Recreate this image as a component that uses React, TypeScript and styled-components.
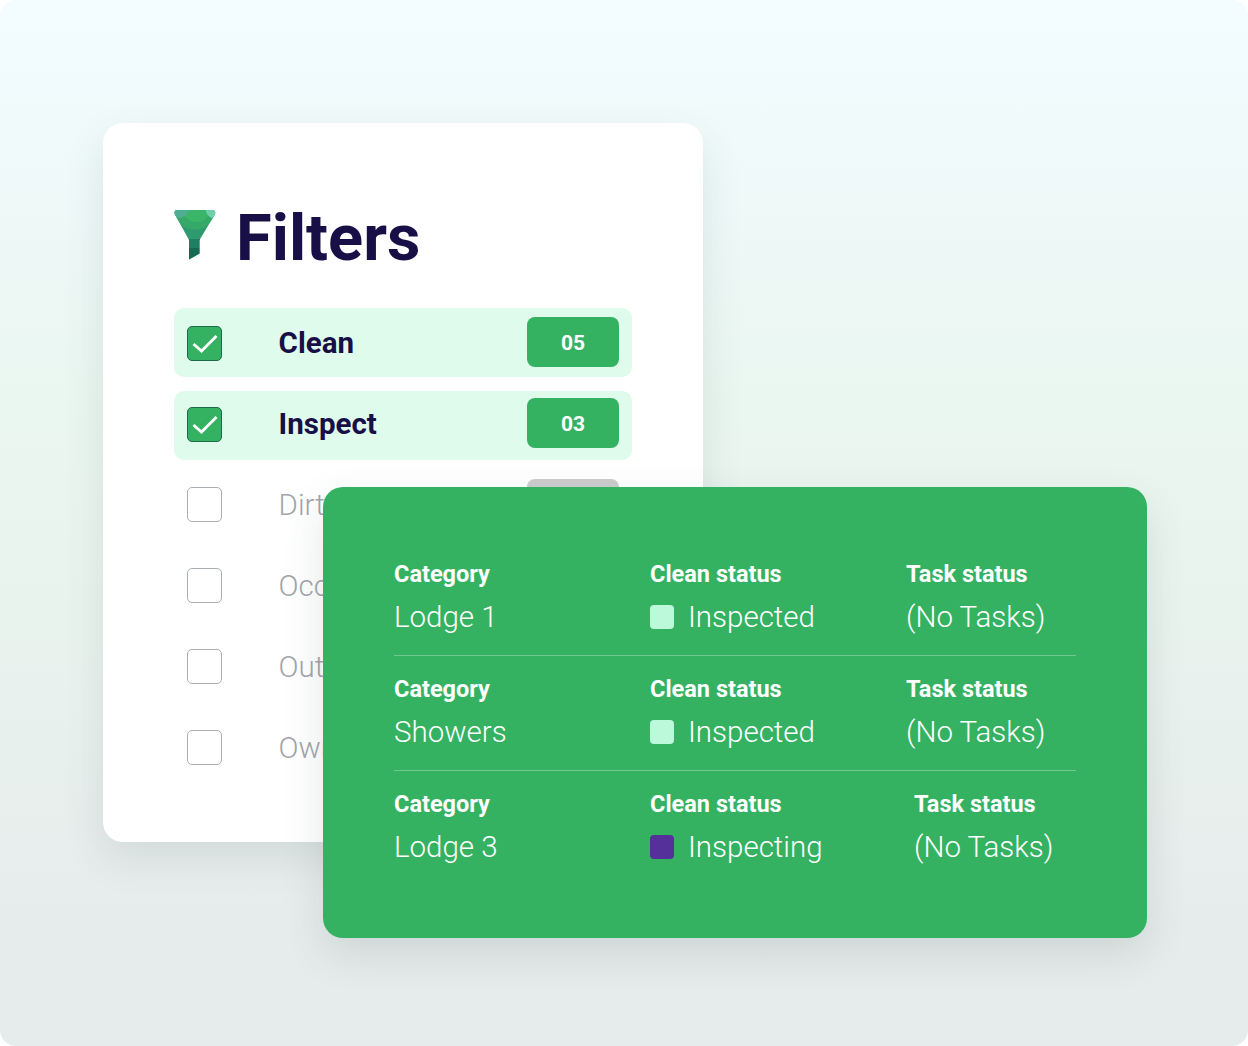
import React from "react";
import styled, { createGlobalStyle } from "styled-components";

const filters = [
  { id: 1, label: "Clean", count: "05", checked: true },
  { id: 2, label: "Inspect", count: "03", checked: true },
  { id: 3, label: "Dirty", count: "02", checked: false },
  { id: 4, label: "Occupied", count: "04", checked: false },
  { id: 5, label: "Out", count: "01", checked: false },
  { id: 6, label: "Owner", count: "00", checked: false },
];

const rooms = [
  { id: 1, category: "Lodge 1", status: "Inspected", color: "#bcf8da", shifted: false },
  { id: 2, category: "Showers", status: "Inspected", color: "#bcf8da", shifted: false },
  { id: 3, category: "Lodge 3", status: "Inspecting", color: "#55309a", shifted: true },
];

function FunnelIcon() {
  return (
    <svg width="42" height="50" viewBox="0 0 42 50">
      <defs>
        <clipPath id="funnel">
          <path d="M3 0H38C40.5 0 42 2 40.8 4.5L25.5 30V43.5L15 49.5V30L1 4.5C0 2 1 0 3 0Z" />
        </clipPath>
      </defs>
      <g clipPath="url(#funnel)">
        <rect width="42" height="50" fill="#2f9a70" />
        <path d="M0 0H42V8L30 18C22 21 14 20 7 15L0 6Z" fill="#36a868" />
        <path d="M8 0H36C35 9 27 13 20 12C14 11 9 6 8 0Z" fill="#3bb568" />
        <path d="M0 0H15C14 4 10 8 4 8L0 7Z" fill="#4fae92" />
        <path d="M32 0H42V5L38 8C35 7 32 4 32 0Z" fill="#6fcfaa" />
        <path d="M15 29H26V38H15Z" fill="#1f7f63" />
        <path d="M15 38H26V50H15Z" fill="#176b52" />
      </g>
    </svg>
  );
}

function CheckIcon() {
  return (
    <svg width="26" height="19" viewBox="0 0 26 19" fill="none">
      <path d="M1.5 10L9.5 17L24.5 2" stroke="#fff" strokeWidth="2.8" />
    </svg>
  );
}

export default function App() {
  return (
    <>
      <GlobalStyle />
      <Canvas>
        <FilterCard>
          <Title>
            <FunnelIcon />
            <h1>Filters</h1>
          </Title>
          <FilterList>
            {filters.map((item) => (
              <FilterRow key={item.id} $checked={item.checked}>
                <Checkbox $checked={item.checked}>
                  {item.checked && <CheckIcon />}
                </Checkbox>
                <FilterLabel $checked={item.checked}>{item.label}</FilterLabel>
                <Count $checked={item.checked}>{item.count}</Count>
              </FilterRow>
            ))}
          </FilterList>
        </FilterCard>
        <StatusPanel>
          {rooms.map((room) => (
            <StatusRow key={room.id}>
              <Cell>
                <CellLabel>Category</CellLabel>
                <CellValue>{room.category}</CellValue>
              </Cell>
              <Cell>
                <CellLabel>Clean status</CellLabel>
                <CellValue>
                  <Swatch $color={room.color} />
                  {room.status}
                </CellValue>
              </Cell>
              <Cell $shifted={room.shifted}>
                <CellLabel>Task status</CellLabel>
                <CellValue>(No Tasks)</CellValue>
              </Cell>
            </StatusRow>
          ))}
        </StatusPanel>
      </Canvas>
    </>
  );
}

const GlobalStyle = createGlobalStyle`
  html, body {
    margin: 0;
    background: #fff;
  }
  body {
    font-family: Roboto, "Liberation Sans", sans-serif;
  }
`;

const Canvas = styled.div`
  position: relative;
  box-sizing: border-box;
  width: 1248px;
  height: 1046px;
  padding: 123px 0 0 103px;
  border-radius: 16px;
  overflow: hidden;
  background: linear-gradient(180deg, #f3fcff 0%, #eef9f8 20%, #eaf6f0 38%, #e9f3ee 60%, #e6ecec 88%, #e6ebeb 100%);
`;

const FilterCard = styled.section`
  box-sizing: border-box;
  width: 600px;
  height: 719px;
  padding: 76px 71px 0;
  border-radius: 20px;
  background: #fff;
  box-shadow: 0 16px 40px rgba(60, 80, 80, 0.12);
`;

const Title = styled.div`
  display: flex;
  align-items: center;
  gap: 20px;
  height: 77px;
  margin-bottom: 32px;

  svg {
    margin-top: -5px;
  }

  h1 {
    margin: 0;
    font-size: 65px;
    font-weight: 700;
    color: #190f47;
  }
`;

const FilterList = styled.div`
  display: flex;
  flex-direction: column;
`;

const FilterRow = styled.div<{ $checked: boolean }>`
  box-sizing: border-box;
  display: flex;
  align-items: center;
  height: 69px;
  padding: 0 13px;
  margin-bottom: 12px;
  border-radius: 10px;
  background: ${({ $checked }) => ($checked ? "#dffbec" : "transparent")};

  &:nth-child(1) {
    padding-top: 1px;
    margin-bottom: 14px;
  }
  &:nth-child(2) {
    padding-bottom: 3px;
    margin-bottom: 10px;
  }
`;

const Checkbox = styled.span<{ $checked: boolean }>`
  box-sizing: border-box;
  display: flex;
  align-items: center;
  justify-content: center;
  flex: none;
  width: 35px;
  height: 35px;
  border-radius: 5px;
  border: 1px solid ${({ $checked }) => ($checked ? "#1c6b4c" : "#a9aeb3")};
  background: ${({ $checked }) => ($checked ? "#34b262" : "#fff")};
`;

const FilterLabel = styled.span<{ $checked: boolean }>`
  flex: 1;
  margin-left: 56.6px;
  font-size: 29.5px;
  font-weight: ${({ $checked }) => ($checked ? 700 : 300)};
  color: ${({ $checked }) => ($checked ? "#190f47" : "#a2a5ab")};
`;

const Count = styled.span<{ $checked: boolean }>`
  box-sizing: border-box;
  display: flex;
  align-items: center;
  justify-content: center;
  width: 92px;
  height: 50px;
  padding-top: 2px;
  margin-top: -1px;
  margin-bottom: 1px;
  border-radius: 8px;
  font-size: 21px;
  font-weight: 700;
  color: #fff;
  background: ${({ $checked }) => ($checked ? "#34b262" : "#cdcdcf")};
`;

const StatusPanel = styled.section`
  position: absolute;
  left: 323px;
  top: 487px;
  box-sizing: border-box;
  width: 824px;
  height: 451px;
  padding: 66px 71px 0;
  border-radius: 20px;
  background: #34b262;
  box-shadow: 0 16px 40px rgba(60, 80, 80, 0.14);
`;

const StatusRow = styled.div`
  display: grid;
  grid-template-columns: 256px 256px 1fr;
  height: 102px;
  margin-bottom: 12px;
  border-bottom: 1px solid rgba(255, 255, 255, 0.3);

  &:last-child {
    border-bottom: none;
  }
`;

const Cell = styled.div<{ $shifted?: boolean }>`
  padding-left: ${({ $shifted }) => ($shifted ? "8px" : "0")};
  color: #fff;
  white-space: nowrap;
`;

const CellLabel = styled.div`
  height: 43px;
  font-size: 23.5px;
  line-height: 43px;
  font-weight: 700;
`;

const CellValue = styled.div`
  display: flex;
  align-items: center;
  height: 41px;
  font-size: 29.5px;
  font-weight: 300;
`;

const Swatch = styled.span<{ $color: string }>`
  flex: none;
  width: 24px;
  height: 24px;
  margin-right: 14px;
  border-radius: 4px;
  background: ${({ $color }) => $color};
`;
